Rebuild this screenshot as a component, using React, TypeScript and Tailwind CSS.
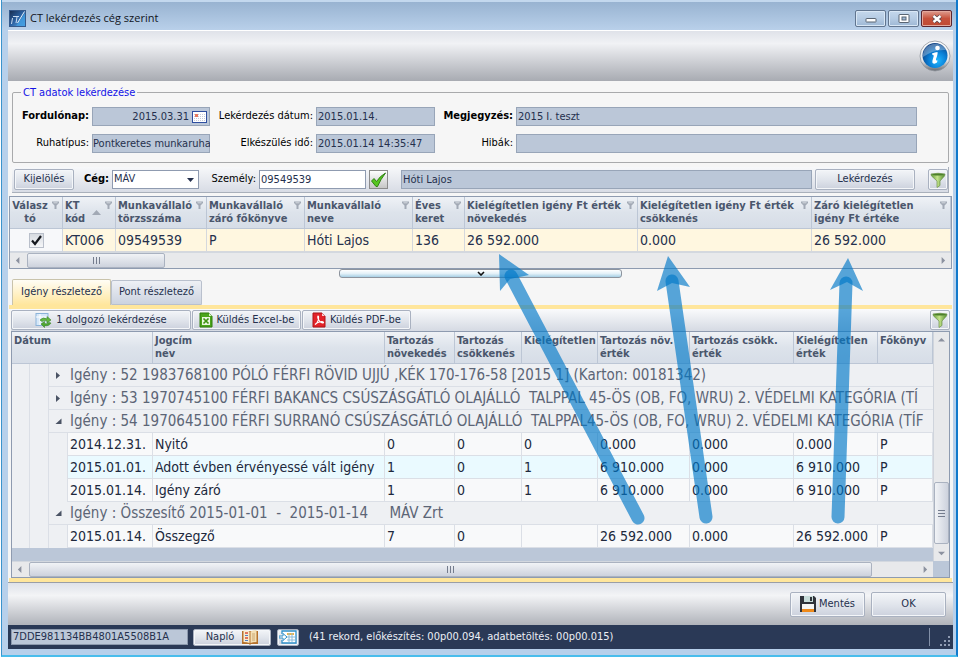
import type { ReactNode } from "react";
import clsx from "clsx";

const FIELD =
  "block h-[19px] w-full min-w-0 bg-[#bbc7d8] text-[11px] text-[#25304d] shadow-[inset_0_0_0_1px_#98a5b8] outline-none";
const HEAD =
  "relative overflow-hidden border-r border-b border-[#bcc6d5] bg-linear-to-b from-[#eff2f6] via-[#dde3eb] to-[#d6dde7] px-[2px] pt-[2px] align-top text-[11px] leading-[13px] font-bold whitespace-nowrap text-[#4a566c]";

const UPPER_COLUMNS = [
  { lines: ["Válasz", "tó"], width: "w-[53px]", value: "" },
  { lines: ["KT", "kód"], width: "w-[53px]", value: "KT006" },
  { lines: ["Munkavállaló", "törzsszáma"], width: "w-[91px]", value: "09549539" },
  { lines: ["Munkavállaló", "záró főkönyve"], width: "w-[98px]", value: "P" },
  { lines: ["Munkavállaló", "neve"], width: "w-[108px]", value: "Hóti Lajos" },
  { lines: ["Éves", "keret"], width: "w-[52px]", value: "136" },
  { lines: ["Kielégítetlen igény Ft érték", "növekedés"], width: "w-[173px]", value: "26 592.000" },
  { lines: ["Kielégítetlen igény Ft érték", "csökkenés"], width: "w-[174px]", value: "0.000" },
  { lines: ["Záró kielégítetlen", "igény Ft értéke"], width: "w-auto", value: "26 592.000" },
];

const LOWER_COLUMNS = [
  ["Jogcím", "név"],
  ["Tartozás", "növekedés"],
  ["Tartozás", "csökkenés"],
  ["Kielégítetlen", ""],
  ["Tartozás növ.", "érték"],
  ["Tartozás csökk.", "érték"],
  ["Kielégítetlen", "érték"],
  ["Főkönyv", ""],
];

type Row =
  | { kind: "group"; open: boolean; text: string }
  | { kind: "item"; tinted?: boolean; cells: string[] };

const ROWS: Row[] = [
  { kind: "group", open: false, text: "Igény : 52 1983768100 PÓLÓ FÉRFI RÖVID UJJÚ ,KÉK 170-176-58 [2015 1] (Karton: 00181342)" },
  { kind: "group", open: false, text: "Igény : 53 1970745100 FÉRFI BAKANCS CSÚSZÁSGÁTLÓ OLAJÁLLÓ  TALPPAL 45-ÖS (OB, FO, WRU) 2. VÉDELMI KATEGÓRIA (TÍ" },
  { kind: "group", open: true, text: "Igény : 54 1970645100 FÉRFI SURRANÓ CSÚSZÁSGÁTLÓ OLAJÁLLÓ  TALPPAL45-ÖS (OB, FO, WRU) 2. VÉDELMI KATEGÓRIA (TÍF" },
  { kind: "item", cells: ["2014.12.31.", "Nyitó", "0", "0", "0", "0.000", "0.000", "0.000", "P"] },
  { kind: "item", tinted: true, cells: ["2015.01.01.", "Adott évben érvényessé vált igény", "1", "0", "1", "6 910.000", "0.000", "6 910.000", "P"] },
  { kind: "item", cells: ["2015.01.14.", "Igény záró", "1", "0", "1", "6 910.000", "0.000", "6 910.000", "P"] },
  { kind: "group", open: true, text: "Igény : Összesítő 2015-01-01  -  2015-01-14     MÁV Zrt" },
  { kind: "item", cells: ["2015.01.14.", "Összegző", "7", "0", "", "26 592.000", "0.000", "26 592.000", "P"] },
];

function Button({ className, children, label }: { className?: string; children: ReactNode; label?: string }) {
  return (
    <button
      type="button"
      aria-label={label}
      className={clsx(
        "flex shrink-0 items-center justify-center rounded-[2px] border border-[#a9b1c0] bg-linear-to-b from-[#f3f5f8] via-[#e1e5ec] to-[#ccd1dd] text-[11px] text-[#25304d] shadow-[inset_0_0_0_1px_#f4f6f9]",
        className,
      )}
    >
      {children}
    </button>
  );
}

function Funnel() {
  return (
    <svg width="16" height="16" viewBox="0 0 16 16">
      <defs>
        <linearGradient id="funnel" x1="0" x2="1">
          <stop offset="0" stopColor="#5e9a35" />
          <stop offset=".45" stopColor="#c5e48c" />
          <stop offset="1" stopColor="#4f8a2b" />
        </linearGradient>
      </defs>
      <path d="M1 2 Q8 .5 15 2 L14.5 4 L10 9 V13.5 L7 15.5 V9 L1.5 4Z" fill="url(#funnel)" stroke="#6b8f4c" strokeWidth=".7" />
      <ellipse cx="8" cy="2.6" rx="5.8" ry="1" fill="#4c7f2b" />
    </svg>
  );
}

function HeaderPin() {
  return (
    <svg className="absolute top-[4px] right-[3px]" width="7" height="8" viewBox="0 0 7 8">
      <path d="M0 .5H7V2L4.5 4.5V8H2.500V4.5L0 2Z" fill="#a2a9b5" />
      <path d="M1.5 1.8H5.5" stroke="#e9edf2" strokeWidth=".7" />
    </svg>
  );
}

function Triangle({ dir }: { dir: "left" | "right" | "up" | "down" }) {
  const d = { left: "M5 0V8L1 4Z", right: "M3 0V8L7 4Z", up: "M0 5H8L4 1Z", down: "M0 3H8L4 7Z" }[dir];
  return (
    <svg width="7" height="7" viewBox="0 0 8 8">
      <path d={d} fill="#8b919f" />
    </svg>
  );
}

function HorizontalScroll({ thumb }: { thumb: string }) {
  return (
    <div className="flex h-4 items-stretch border-t border-[#d3d8df] bg-[#e8e9eb]">
      <span className="flex w-[17px] items-center justify-center"><Triangle dir="left" /></span>
      <div className="flex flex-1">
        <div className={clsx("flex items-center justify-center gap-[2px] rounded-[2px] border border-[#aab2c0] bg-linear-to-b from-[#f1f3f6] to-[#cdd2dd]", thumb)}>
          <i className="h-[7px] w-px bg-[#747c8d]" />
          <i className="h-[7px] w-px bg-[#747c8d]" />
          <i className="h-[7px] w-px bg-[#747c8d]" />
        </div>
      </div>
      <span className="flex w-[17px] items-center justify-center"><Triangle dir="right" /></span>
    </div>
  );
}

const CAPTION_BUTTON =
  "flex h-[17px] w-[31px] items-center justify-center rounded-[2px] border border-[#61758f] bg-linear-to-b from-[#c5d8ec] via-[#b5cbe3] via-50% to-[#9db8d5] shadow-[inset_0_0_0_1px_#d9e7f5]";

function TitleBar() {
  return (
    <header className="flex h-[30px] items-center gap-1 border-t-2 border-[#c3d8ee] bg-linear-to-b from-[#98b3d1] to-[#b9d0ea] pt-[5px] pr-[4px] pl-[7px]">
      <svg width="17" height="17" viewBox="0 0 17 17">
        <defs>
          <linearGradient id="logo" x1="0" y1="0" x2="1" y2="1">
            <stop offset="0" stopColor="#182b4d" />
            <stop offset=".5" stopColor="#2b62a4" />
            <stop offset="1" stopColor="#69b7ef" />
          </linearGradient>
        </defs>
        <rect x=".5" y=".5" width="16" height="16" fill="url(#logo)" stroke="#35598b" />
        <path d="M7 16 L16 3 V16Z" fill="#3e9be0" opacity=".8" />
        <path d="M4 6.500H10M3.500 8L2.500 14M8 7L7 13" stroke="#c9dcf2" strokeWidth="1" fill="none" />
        <path d="M8.500 13L15.500 1.500" stroke="#e4f0fb" strokeWidth="1" />
      </svg>
      <h1 className="flex-1 font-['Open_Sans',sans-serif] text-[11px] text-[#10141c]">CT lekérdezés cég szerint</h1>
      <div className="flex gap-[2px]">
        <button type="button" aria-label="Kis méret" className={CAPTION_BUTTON}>
          <svg width="12" height="9" viewBox="0 0 12 9"><rect x="1" y="4.500" width="10" height="3.500" rx=".5" fill="#fff" stroke="#596573" /></svg>
        </button>
        <button type="button" aria-label="Teljes méret" className={CAPTION_BUTTON}>
          <svg width="12" height="9" viewBox="0 0 12 9"><rect x="1" y=".5" width="10" height="8" rx=".5" fill="#fff" stroke="#596573" /><rect x="4" y="3" width="4" height="3" fill="#9db8d5" stroke="#596573" /></svg>
        </button>
        <button type="button" aria-label="Bezárás" className="flex h-[17px] w-[31px] items-center justify-center rounded-[2px] border border-[#5a2630] bg-linear-to-b from-[#dd9c8f] via-[#c6513c] via-50% to-[#bf4a33] shadow-[inset_0_0_0_1px_#e3a89c]">
          <svg width="12" height="10" viewBox="0 0 12 10"><path d="M2.500 2L9.500 8M9.500 2L2.500 8" stroke="#55444c" strokeWidth="4" /><path d="M2.500 2L9.500 8M9.500 2L2.500 8" stroke="#fff" strokeWidth="2.400" /></svg>
        </button>
      </div>
    </header>
  );
}

function Ribbon() {
  return (
    <div className="flex h-[51px] justify-end border-t border-white bg-linear-to-b from-[#dfe2e9] via-[#f1f2f5] via-25% to-[#a8abb2] pt-[9px] pr-[2px]">
      <button type="button" aria-label="Információ" className="h-8">
        <svg width="32" height="32" viewBox="0 0 32 32">
          <defs>
            <linearGradient id="ring" x1="0" y1="0" x2="0" y2="1">
              <stop offset="0" stopColor="#fff" />
              <stop offset=".65" stopColor="#e4e6e9" />
              <stop offset="1" stopColor="#63676e" />
            </linearGradient>
            <radialGradient id="disc" cx=".6" cy=".7" r=".7">
              <stop offset="0" stopColor="#1fb6ff" />
              <stop offset=".5" stopColor="#0a7fd6" />
              <stop offset="1" stopColor="#0b3f83" />
            </radialGradient>
          </defs>
          <circle cx="16" cy="16" r="15" fill="url(#ring)" stroke="#8f949c" strokeWidth=".8" />
          <circle cx="16" cy="15.500" r="12.500" fill="url(#disc)" />
          <path d="M4 14 A12.500 12.500 0 0 1 27 10 Q15 9 4 17Z" fill="#fff" opacity=".3" />
          <circle cx="18.500" cy="8" r="2.300" fill="#fff" />
          <path d="M13 13.500 Q16 12 18.500 12 Q19 14 17 19 Q16.500 21 18.500 20.500 L18 22.500 Q15.500 24.500 13.500 23 Q13 21 14.500 17 Q15.300 14.500 13 14.500Z" fill="#fff" />
        </svg>
      </button>
    </div>
  );
}

function QueryData() {
  const label = "text-right text-[11px] whitespace-nowrap text-black";
  return (
    <fieldset className="mx-1 rounded-[2px] border border-[#a9aaac] pr-[31px] pb-[9px]">
      <legend className="ml-2 px-[2px] text-[11px] leading-[13px] text-[#1313e6]">CT adatok lekérdezése</legend>
      <div className="mt-2 grid grid-cols-[76px_118px_100px_119px_75px_1fr] items-center gap-x-[3px] gap-y-2">
        <label htmlFor="fordulonap" className={clsx(label, "font-bold")}>Fordulónap:</label>
        <div className="relative">
          <input id="fordulonap" readOnly defaultValue="2015.03.31" className={clsx(FIELD, "pr-[21px] pl-[2px] text-right")} />
          <svg className="absolute top-[4px] right-[3px]" width="15" height="12" viewBox="0 0 15 12">
            <rect x=".5" y=".5" width="14" height="11" fill="#fff" stroke="#2f4fa0" />
            <path d="M2 3.500H13M2 5.500H13M2 7.500H13M2 9.500H13" stroke="#c4cada" strokeDasharray="1 1" />
            <rect x="3" y="3" width="3" height="3" fill="#e8795e" />
          </svg>
        </div>
        <label htmlFor="datum" className={label}>Lekérdezés dátum:</label>
        <input id="datum" readOnly defaultValue="2015.01.14." className={clsx(FIELD, "px-[2px]")} />
        <label htmlFor="megjegyzes" className={clsx(label, "font-bold")}>Megjegyzés:</label>
        <input id="megjegyzes" readOnly defaultValue="2015 I. teszt" className={clsx(FIELD, "px-[2px]")} />
        <label htmlFor="ruhatipus" className={label}>Ruhatípus:</label>
        <input id="ruhatipus" readOnly defaultValue="Pontkeretes munkaruha" className={clsx(FIELD, "pl-px")} />
        <label htmlFor="ido" className={label}>Elkészülés idő:</label>
        <input id="ido" readOnly defaultValue="2015.01.14 14:35:47" className={clsx(FIELD, "px-[2px]")} />
        <label htmlFor="hibak" className={label}>Hibák:</label>
        <input id="hibak" readOnly className={clsx(FIELD, "px-[2px]")} />
      </div>
    </fieldset>
  );
}

function FilterBar() {
  return (
    <div className="mx-1 mt-1 flex h-[26px] items-center border-r border-b border-[#a9b0bb] bg-linear-to-b from-[#f7f8fa] to-[#d8dce5] text-[11px] text-black">
      <Button className="ml-[2px] h-[21px] w-[60px]">Kijelölés</Button>
      <label htmlFor="ceg" className="w-[38px] shrink-0 pr-[3px] text-right font-bold">Cég:</label>
      <div className="relative w-[87px] shrink-0">
        <select id="ceg" className="block h-[19px] w-full appearance-none border border-[#8f9bb0] bg-white px-px text-[#25304d]">
          <option>MÁV</option>
        </select>
        <svg className="pointer-events-none absolute top-2 right-[5px]" width="7" height="4" viewBox="0 0 7 4"><path d="M0 0H7L3.500 4Z" fill="#25304d" /></svg>
      </div>
      <label htmlFor="szemely" className="w-[60px] shrink-0 pr-[3px] text-right">Személy:</label>
      <input id="szemely" defaultValue="09549539" className="h-[19px] w-[107px] shrink-0 border border-[#8f9bb0] bg-white px-px text-[#25304d]" />
      <button type="button" aria-label="Elfogad" className="ml-[3px] flex size-[19px] shrink-0 items-center justify-center border border-[#8b8b8b] bg-linear-to-b from-white to-[#c6c6c6]">
        <svg width="17" height="16" viewBox="0 0 17 16"><path d="M1.500 9 L4 6.500 L6.500 9.500 Q10 4 15.500 1 Q10.500 7.500 7.500 14.500 H6Z" fill="#57c51f" stroke="#267a0a" strokeWidth=".9" /></svg>
      </button>
      <input aria-label="Személy neve" readOnly defaultValue="Hóti Lajos" className={clsx(FIELD, "ml-[13px] flex-1 px-[2px]")} />
      <Button className="ml-[3px] h-[21px] w-[100px]">Lekérdezés</Button>
      <Button label="Szűrő" className="ml-[13px] h-[21px] w-[20px]"><Funnel /></Button>
    </div>
  );
}

function UpperGrid() {
  return (
    <section className="mx-px mt-[3px] border border-[#8e9bb0] bg-[#f6f7f9]">
      <table className="w-full table-fixed border-separate border-spacing-0">
        <colgroup>{UPPER_COLUMNS.map((c, i) => <col key={i} className={c.width} />)}</colgroup>
        <thead>
          <tr className="h-8">
            {UPPER_COLUMNS.map(({ lines }, i) => (
              <th key={i} className={clsx(HEAD, i > 0 && "text-left")}>
                <div className={clsx(i === 0 && "mr-[12px]")}>{lines[0]}<br />{lines[1]}</div>
                <HeaderPin />
                {i === 1 && <svg className="absolute right-[14px] bottom-[13px]" width="9" height="5" viewBox="0 0 9 5"><path d="M0 5H9L4.500 0Z" fill="#a2a9b5" /></svg>}
              </th>
            ))}
          </tr>
        </thead>
        <tbody>
          <tr className="h-[23px]">
            <td className="border-r border-b border-[#d0d6e0] bg-[#f7f8fa] p-0">
              <span className="relative mx-auto block size-[15px]">
                <input type="checkbox" aria-label="Választó" defaultChecked className="block size-[15px] appearance-none border border-[#b9bfca] bg-linear-to-b from-[#d7dbe1] to-[#f5f6f8]" />
                <svg className="pointer-events-none absolute inset-0" width="15" height="15" viewBox="0 0 15 15"><path d="M3 7.500L6 11L12 3" fill="none" stroke="#15181e" strokeWidth="2.200" /></svg>
              </span>
            </td>
            {UPPER_COLUMNS.slice(1).map((c, i) => (
              <td key={i} className="overflow-hidden border-r border-b border-[#d5d8dd] bg-[#fff7e0] px-[2px] py-0 text-[14px] leading-[20px] whitespace-nowrap text-[#25304d]">{c.value}</td>
            ))}
          </tr>
        </tbody>
      </table>
      <HorizontalScroll thumb="w-[138px]" />
    </section>
  );
}

function Toolbar() {
  return (
    <div className="flex h-[23px] items-center gap-px border-b border-[#8e9bb0] bg-linear-to-b from-[#fafbfc] to-[#d5dae3]">
      <Button className="h-[20px] w-[180px] gap-1">
        <svg width="17" height="16" viewBox="0 0 17 16">
          <rect x="1" y="1.500" width="12" height="12" fill="#d5e7f8" stroke="#8bb3d9" />
          <path d="M1 5H13M5 2V13" stroke="#fff" />
          <path d="M5 8 Q8 4.500 12 7V4.500L16 8L12 11V9Q9 8 7 9.500Z" fill="#63b840" stroke="#3a8526" strokeWidth=".6" />
          <path d="M16 11 Q14 14.500 9.500 13.500V15.500L6 12L9.500 9.500V11.500Q12 12.500 14 10.500Z" fill="#4fa82f" stroke="#3a8526" strokeWidth=".6" />
        </svg>
        1 dolgozó lekérdezése
      </Button>
      <Button className="h-[20px] w-[109px] gap-1">
        <svg width="14" height="16" viewBox="0 0 14 16">
          <path d="M1 1H10L13 4V15H1Z" fill="#4ba51b" stroke="#2e7d0c" />
          <path d="M10 1V4H13Z" fill="#d9f0c8" />
          <rect x="3" y="5" width="8" height="8" fill="#e9f6e0" />
          <path d="M4.500 6.500L9.500 11.500M9.500 6.500L4.500 11.500" stroke="#3d9312" strokeWidth="1.700" />
        </svg>
        Küldés Excel-be
      </Button>
      <Button className="h-[20px] w-[109px] gap-1">
        <svg width="14" height="16" viewBox="0 0 14 16">
          <path d="M1 1H10L13 4V15H1Z" fill="#e3242a" stroke="#ad1217" />
          <path d="M10 1V4H13Z" fill="#fbd0d1" />
          <path d="M3 12.500C6 11 7 6.500 6.500 4.500C6 3 5 5 6.500 7.500C8 10.500 10.500 11.500 11.500 10.500C11 9 6 9.500 3 12.500Z" fill="none" stroke="#fff" strokeWidth="1.100" />
        </svg>
        Küldés PDF-be
      </Button>
      <Button label="Szűrő" className="ml-auto h-[20px] w-[20px]"><Funnel /></Button>
    </div>
  );
}

function DetailRow({ row }: { row: Row }) {
  const indent = "border-r border-[#dbdfe6] bg-[#eef0f3]";
  if (row.kind === "group") {
    return (
      <tr className="h-[23px]">
        <td className={indent} />
        <td className={indent} />
        <td colSpan={10} className="overflow-hidden border-b border-[#dbdfe6] bg-[#eef0f3] p-0 text-[15px] leading-[20px] text-[#5c6576]">
          <div className="flex items-center whitespace-pre">
            <span className="flex w-[21px] shrink-0 items-center pl-[6px]">
              <svg width="7" height="7" viewBox="0 0 7 7"><path d={row.open ? "M6.500 .5V6H.5Z" : "M1 0V7L5 3.500Z"} fill="#4a5364" /></svg>
            </span>
            {row.text}
          </div>
        </td>
      </tr>
    );
  }
  return (
    <tr className="h-[23px]">
      <td className={indent} />
      <td className={indent} />
      <td className={indent} />
      {row.cells.map((cell, i) => (
        <td
          key={i}
          className={clsx(
            "overflow-hidden border-r border-b border-[#dbdfe6] px-[2px] py-0 text-[14px] leading-[20px] whitespace-nowrap text-[#20283c]",
            row.tinted ? "bg-[#eafaff]" : "bg-[#f8f9fa]",
          )}
        >
          {cell}
        </td>
      ))}
    </tr>
  );
}

function DetailGrid() {
  return (
    <div className="flex flex-1 border border-t-0 border-[#8e9bb0] bg-[#bbc7d8]">
      <div className="flex min-w-0 flex-1 flex-col">
        <table className="w-full table-fixed border-separate border-spacing-0">
          <colgroup>
            <col className="w-[18px]" />
            <col className="w-[19px]" />
            <col className="w-[19px]" />
            <col className="w-[85px]" />
            <col className="w-[232px]" />
            <col className="w-[70px]" />
            <col className="w-[67px]" />
            <col className="w-[76px]" />
            <col className="w-[92px]" />
            <col className="w-[104px]" />
            <col className="w-[84px]" />
            <col className="w-auto" />
          </colgroup>
          <thead>
            <tr className="h-8">
              <th colSpan={4} className={clsx(HEAD, "text-left")}>Dátum</th>
              {LOWER_COLUMNS.map(([top, bottom], i) => (
                <th key={i} className={clsx(HEAD, "text-left")}>{top}<br />{bottom}</th>
              ))}
            </tr>
          </thead>
          <tbody>{ROWS.map((row, i) => <DetailRow key={i} row={row} />)}</tbody>
        </table>
        <div className="min-h-2 flex-1" />
        <HorizontalScroll thumb="w-[95%]" />
      </div>
      <div className="flex w-4 flex-col">
        <div className="flex flex-1 flex-col border-l border-[#cfd4dc] bg-[#e8e9eb]">
          <span className="flex h-[17px] items-center justify-center"><Triangle dir="up" /></span>
          <div className="flex-1" />
          <div className="flex h-[62px] flex-col items-center justify-center gap-[2px] rounded-[2px] border border-[#aab2c0] bg-linear-to-r from-[#f1f3f6] to-[#cdd2dd]">
            <i className="h-px w-[7px] bg-[#747c8d]" />
            <i className="h-px w-[7px] bg-[#747c8d]" />
            <i className="h-px w-[7px] bg-[#747c8d]" />
          </div>
          <span className="flex h-[17px] items-center justify-center"><Triangle dir="down" /></span>
        </div>
        <div className="h-4" />
      </div>
    </div>
  );
}

function Footer() {
  return (
    <footer>
      <div className="flex h-[43px] items-center justify-end gap-[6px] border-t border-[#9a9ea6] bg-linear-to-b from-[#dfe2e9] via-[#f3f4f6] via-30% to-[#b0b3ba] pr-[7px]">
        <Button className="h-[25px] w-[75px] gap-[3px]">
          <svg width="16" height="16" viewBox="0 0 16 16">
            <path d="M0 0H14L16 2V16H0Z" fill="#30333a" />
            <rect x="4" y="0" width="9" height="6" fill="#c7dcd9" />
            <rect x="10" y="1" width="2" height="4" fill="#30333a" />
            <rect x="2" y="8" width="12" height="6" fill="#f6f6f4" />
            <rect x="2" y="13" width="12" height="3" fill="#ee8a1b" />
          </svg>
          Mentés
        </Button>
        <Button className="h-[25px] w-[75px]">OK</Button>
      </div>
      <div className="flex h-6 items-center bg-[#2a3956] pl-[3px] text-[11px] text-[#eceff5]">
        <input aria-label="Azonosító" readOnly defaultValue="7DDE981134BB4801A5508B1A" className="h-[16px] w-[177px] border border-[#8c99ad] bg-[#bbc7d8] px-px text-[11px] text-[#25304d]" />
        <Button className="ml-[5px] h-[17px] w-[78px] gap-[8px]">
          Napló
          <svg width="16" height="15" viewBox="0 0 16 15">
            <path d="M0 1H16V14H9L8 15L7 14H0Z" fill="#b5722d" />
            <path d="M1.500 0Q5 0 7.500 1.500V13Q5 12 1.500 12Z" fill="#f8ebcf" />
            <path d="M14.500 0Q11 0 8.500 1.500V13Q11 12 14.500 12Z" fill="#f3dfb5" />
            <path d="M3 3H6M3 8H6" stroke="#d94f39" strokeWidth="1.500" />
            <path d="M3 5.500H6M3 10.500H6" stroke="#517ec2" />
            <path d="M10 4H13M10 6H13M10 8H13M10 10H13" stroke="#c29a62" strokeWidth=".8" />
          </svg>
        </Button>
        <Button label="Táblázat" className="ml-[6px] h-[17px] w-[22px]">
          <svg width="18" height="14" viewBox="0 0 18 14">
            <path d="M3 4V1H17V13H3V10" fill="#fff" stroke="#2e8fc8" strokeWidth="1.300" />
            <path d="M8 4H15" stroke="#f0b545" strokeWidth="2" />
            <path d="M8 7H16M8 10H16M10 3V12M13 3V12" stroke="#8abbd9" />
            <path d="M0 6H4V3.500L8 7L4 10.500V8H0Z" fill="#fff" stroke="#2e8fc8" />
          </svg>
        </Button>
        <p className="ml-[10px] flex-1 whitespace-nowrap">(41 rekord, előkészítés: 00p00.094, adatbetöltés: 00p00.015)</p>
        <i className="mr-[9px] h-[18px] w-px bg-[#8290a8]" />
        <svg className="mr-[2px] self-end" width="12" height="13" viewBox="0 0 12 13" fill="#8f9cb3">
          <path d="M9 0h2v2H9zM5 4h2v2H5zM9 4h2v2H9zM1 8h2v2H1zM5 8h2v2H5zM9 8h2v2H9z" />
        </svg>
      </div>
    </footer>
  );
}

// Pointers from the summary row up to the matching totals.
function Arrows() {
  return (
    <svg className="pointer-events-none absolute top-0 left-0" width="960" height="657" viewBox="0 0 960 657">
      <g stroke="#0078c8" strokeOpacity=".65" strokeWidth="13" strokeLinecap="round">
        <path d="M638 518L511 276" />
        <path d="M706 517L672 281" />
        <path d="M838 517L846 283" />
      </g>
      <g fill="#0078c8" fillOpacity=".65">
        <path d="M499 254L529 275L510 279L500 291Z" />
        <path d="M668 256L690 287L672 283L657 291Z" />
        <path d="M848 258L863 291L847 282L830 290Z" />
      </g>
    </svg>
  );
}

export default function App() {
  return (
    <div className="relative flex min-h-screen flex-col overflow-hidden bg-white pr-[2px] pl-px font-['DejaVu_Sans_Condensed','DejaVu_Sans',sans-serif]">
      <div className="flex flex-1 flex-col border-r-2 border-b-2 border-l border-r-[#1179cb] border-b-[#49bdec] border-l-[#3b93cc] bg-[#b7d0eb]">
        <TitleBar />
        <main className="mr-[3px] mb-[6px] ml-[6px] flex flex-1 flex-col bg-[#f6f6f6]">
          <Ribbon />
          <div className="mt-[5px]"><QueryData /></div>
          <FilterBar />
          <UpperGrid />
          <button type="button" aria-label="Elválasztó" className="mx-auto flex h-[9px] w-[30%] items-center justify-center rounded-[3px] border border-[#8d949e] bg-linear-to-b from-white via-[#e4f1f8] to-[#a7cfe4]">
            <svg width="8" height="5" viewBox="0 0 8 5"><path d="M1 1L4 4L7 1" fill="none" stroke="#111" strokeWidth="1.600" /></svg>
          </button>
          <div role="tablist" className="flex h-[27px] items-end pl-1 text-[11px] text-[#25304d]">
            <button type="button" role="tab" aria-selected="true" className="h-[26px] w-[99px] rounded-t-[2px] border border-b-0 border-[#c9c3ab] bg-linear-to-b from-[#fffdf5] to-[#ffe69c] whitespace-nowrap">Igény részletező</button>
            <button type="button" role="tab" aria-selected="false" className="h-[25px] w-[91px] rounded-t-[2px] border border-[#b9c0cd] bg-linear-to-b from-[#eef0f5] to-[#ccd3e0] whitespace-nowrap">Pont részletező</button>
          </div>
          <section className="mx-px flex flex-1 flex-col border-y-4 border-[#ffe69c] px-[2px]">
            <Toolbar />
            <DetailGrid />
          </section>
          <Footer />
        </main>
      </div>
      <Arrows />
    </div>
  );
}
